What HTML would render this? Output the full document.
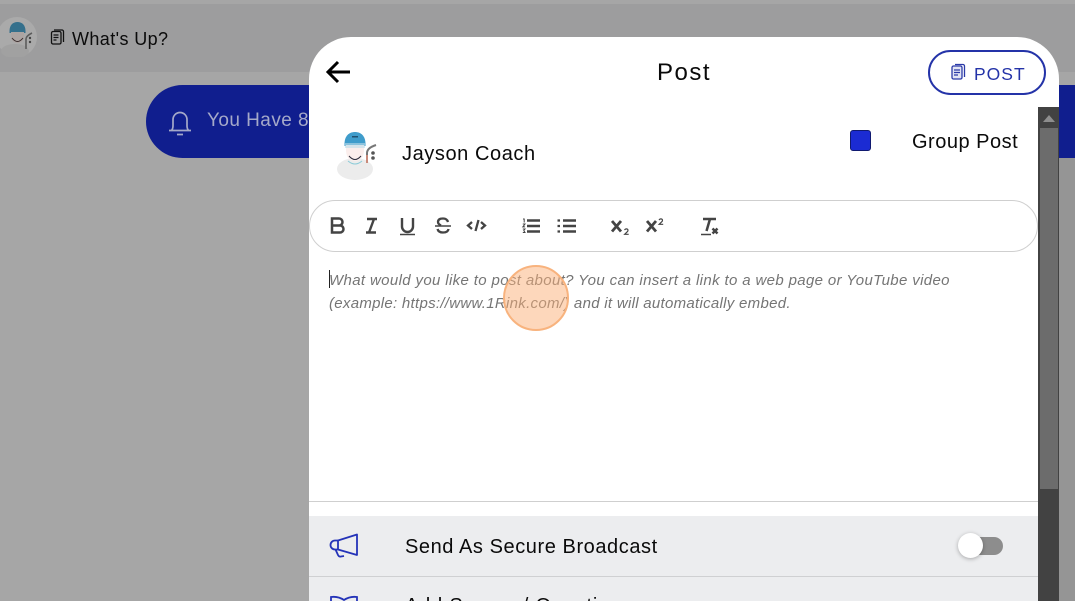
<!DOCTYPE html>
<html><head><meta charset="utf-8">
<style>
html,body{margin:0;padding:0;width:1075px;height:601px;overflow:hidden}
body{background:#a6a6a6;font-family:"Liberation Sans",sans-serif;color:#000}
#w{position:absolute;left:0;top:0;width:1075px;height:601px;overflow:hidden;background:#a6a6a6}
#w>*{position:absolute}
.t{white-space:nowrap}
svg{overflow:hidden}
</style></head><body><div id="w">
<div style="left:-30px;top:4px;width:1200px;height:68px;background:#9d9d9e;border-radius:22px"></div>
<svg style="left:0;top:17px" width="38" height="40" viewBox="0 0 38 40">
<circle cx="17" cy="20" r="20" fill="#aaaaaa"/>
<ellipse cx="15" cy="34" rx="14" ry="7" fill="#a1a1a1"/>
<path d="M9.500 14c0-6 3.500-9 8-9s8 3 8 9v2h-16z" fill="#35708c"/>
<path d="M11 15h13v5q-1 6-6.500 6T11 20z" fill="#aca4a2"/>
<path d="M12 21q5.500 7 11 0" stroke="#3b2f2f" fill="none"/>
<path d="M26 32V22q0-3 6-6" stroke="#5c5c5c" stroke-width="1.600" fill="none"/>
<circle cx="30" cy="21" r="1.200" fill="#444"/><circle cx="30" cy="25" r="1.200" fill="#444"/>
</svg>
<svg style="left:50px;top:28px" width="16" height="18" viewBox="0 0 16 18" fill="none" stroke="#111" stroke-width="1.300">
<rect x="1.500" y="3.500" width="9.500" height="12.500" rx="1.500"/><path d="M4 2h8a1.500 1.500 0 0 1 1.500 1.500V14M3.500 7h5M3.500 9.500h5M3.500 12h3"/>
</svg>
<div class="t" style="left:72px;top:29px;font-size:18px;line-height:21px;letter-spacing:.4px;color:#0b0b0b">What's Up?</div>
<div style="left:146px;top:85px;width:220px;height:73px;border-radius:37px;background:#101e8e"></div>
<svg style="left:167px;top:109px" width="26" height="28" viewBox="0 0 26 28" fill="none" stroke="#a5a9c9" stroke-width="1.700">
<path d="M2 21.500h22M4.500 21.500c1.500-1.500 1.500-3 1.500-5v-6a7 7 0 0 1 14 0v6c0 2 0 3.500 1.500 5M10 25.500h6"/>
</svg>
<div class="t" style="left:207px;top:110px;font-size:19px;line-height:22px;color:#a5a9c9;letter-spacing:.45px">You Have 8</div>

<div style="left:1059px;top:72px;width:16px;height:13px;background:#a6a6a6"></div>
<div style="left:1059px;top:85px;width:16px;height:73px;background:#101e8e"></div>
<div style="left:1059px;top:158px;width:16px;height:443px;background:#959595"></div>

<div style="left:309px;top:37px;width:750px;height:564px;background:#fff;border-radius:42px 42px 0 0"></div>
<div style="left:1038px;top:107px;width:21px;height:494px;background:#424242"></div>
<div style="left:1040px;top:128px;width:18px;height:361px;background:#6c6c6c"></div>
<svg style="left:1043px;top:115px" width="12" height="7" viewBox="0 0 12 7"><path d="M6 0l6 7H0z" fill="#8e8e8e"/></svg>

<svg style="left:325px;top:60px" width="26" height="24" viewBox="0 0 26 24" fill="none" stroke="#000" stroke-width="3">
<path d="M25 12H3M13 2L3 12l10 10"/>
</svg>
<div class="t" style="left:657px;top:59px;font-size:24px;line-height:28px;letter-spacing:1.500px;color:#0a0a0a">Post</div>
<div style="left:928px;top:50px;width:114px;height:41px;border:2px solid #2433a8;border-radius:23px;background:#fff"></div>
<svg style="left:951px;top:63px" width="16" height="18" viewBox="0 0 16 18" fill="none" stroke="#2b3aa8" stroke-width="1.300">
<rect x="1" y="3" width="10" height="13" rx="1.500" fill="#e3e5f4"/><path d="M4 1.500h8a1.500 1.500 0 0 1 1.500 1.500v11M3 7h6M3 9.500h6M3 12h4"/>
</svg>
<div class="t" style="left:974px;top:64px;font-size:17.500px;line-height:20px;letter-spacing:1px;color:#2433a8">POST</div>

<svg style="left:335px;top:130px" width="44" height="52" viewBox="0 0 44 52">
<ellipse cx="20" cy="39" rx="18" ry="11" fill="#ececec"/>
<path d="M9.500 14c0-8 4.500-12 10.500-12s10.500 4 10.500 12v2h-21z" fill="#3f9ccb"/>
<path d="M11 15h18v6q-1 10-9 10t-9-10z" fill="#fbeeec"/>
<path d="M10 13h20v5H10z" fill="#bcdcea" opacity=".6"/>
<path d="M14 26q6 7 12 0" stroke="#2c2c3c" stroke-width="1" fill="none"/>
<path d="M13 31q7 6 14 0" stroke="#8ccbd8" stroke-width="1" fill="none"/>
<rect x="17" y="6" width="6" height="1.500" fill="#1f4f6f"/>
<path d="M32 33V23q0-5 9-8" stroke="#777" stroke-width="2" fill="none"/>
<path d="M32 33V25" stroke="#c98a7a" stroke-width="2" fill="none"/>
<circle cx="38" cy="23" r="1.800" fill="#555"/><circle cx="38" cy="28" r="1.800" fill="#555"/>
</svg>
<div class="t" style="left:402px;top:142px;font-size:20px;line-height:24px;letter-spacing:.58px;color:#0a0a0a">Jayson Coach</div>
<div style="left:850px;top:130px;width:19px;height:19px;background:#1b2bd3;border:1.500px solid #101a70;border-radius:3px"></div>
<div class="t" style="left:912px;top:130px;font-size:20px;line-height:24px;letter-spacing:.5px;color:#0a0a0a">Group Post</div>

<div style="left:309px;top:200px;width:727px;height:50px;border:1px solid #cfcfcf;border-radius:26px;background:#fff"></div>
<svg style="left:329px;top:215px" width="400" height="22" viewBox="0 0 400 22" fill="none" stroke="#444" stroke-width="2.500">
<path d="M3 3.500h7a3.200 3.200 0 0 1 0 7H3zM3 10.500h8a3.500 3.500 0 0 1 0 7H3z"/>
<path d="M38 4h10M37 17.500h10M45 4l-5 13.500" stroke-width="2.400"/>
<path d="M73 3v8.500a5 5 0 0 0 11 0V3" stroke-width="2.400"/><path d="M71 19.500h15" stroke-width="1.500"/>
<path d="M119 7q-1-3.500-5-3.500-5 0-5 3.500 0 2 3 3.500M108.500 14q1 3.500 5.500 3.500 5 0 5.500-3.500" stroke-width="2.300"/><path d="M106 11h16" stroke-width="1.500"/>
<path d="M143 7l-4 3.500 4 3.500M152 7l4 3.500-4 3.500" stroke-width="2.300"/><path d="M149.500 5l-3 11" stroke-width="2.300"/>
<path d="M198 5.500h13M198 11h13M198 16.500h13" stroke-width="2.400"/>
<path d="M194 4h1.200v3.500M193.800 9h2.200l-2.200 2.900h2.300M193.800 14h2.200l-1.200 1.500 1.200 2h-2.200" stroke-width="1"/>
<path d="M234 5.500h13M234 11h13M234 16.500h13" stroke-width="2.400"/>
<path d="M228.500 5.500h2.500M228.500 11h2.500M228.500 16.500h2.500" stroke-width="2.200"/>
<path d="M283 6l9 10.500M292 6l-9 10.500" stroke-width="2.800"/>
<path d="M295.500 15q1-1.500 2.500-1t.7 2.300l-3 3h4" stroke-width="1.200"/>
<path d="M318 6l9 10.500M327 6l-9 10.500" stroke-width="2.800"/>
<path d="M330 5q1-1.500 2.500-1t.7 2.300l-3 3h4" stroke-width="1.200"/>
<path d="M374 4h13M381 4l-3.500 12" stroke-width="2.500"/><path d="M372 19.500h10" stroke-width="1.500"/>
<path d="M383.500 13.500l5 5M388.500 13.500l-5 5" stroke-width="2.500"/>
</svg>

<div style="left:329px;top:270px;width:1px;height:18px;background:#222"></div>
<div class="t" style="left:329px;top:269px;font-size:15px;line-height:23px;font-style:italic;letter-spacing:.36px;color:#757575">What would you like to post about? You can insert a link to a web page or YouTube video</div>
<div class="t" style="left:329px;top:292px;font-size:15px;line-height:23px;font-style:italic;letter-spacing:.29px;color:#757575">(example: https://www.1Rink.com/) and it will automatically embed.</div>
<div style="left:503px;top:265px;width:62px;height:62px;border:2px solid #f8b37e;border-radius:50%;background:rgba(251,176,120,.5)"></div>

<div style="left:309px;top:501px;width:729px;height:1px;background:#cfcfcf"></div>
<div style="left:309px;top:516px;width:729px;height:85px;background:#ecedef"></div>
<div style="left:309px;top:576px;width:729px;height:1px;background:#cfd0d2"></div>
<svg style="left:329px;top:533px" width="30" height="26" viewBox="0 0 30 26" fill="none" stroke="#2433b8" stroke-width="1.800" stroke-linejoin="round">
<path d="M28 1.500v20.500L9 16.500V7.500z"/><path d="M9 7.500H6a4.500 4.500 0 0 0 0 9h3M6.500 16.500l2.500 5.500q1 2 3 1.500l3-.5"/>
</svg>
<div class="t" style="left:405px;top:535px;font-size:20px;line-height:24px;letter-spacing:.57px;color:#0a0a0a">Send As Secure Broadcast</div>
<div style="left:971px;top:537px;width:32px;height:18px;border-radius:9px;background:#8d8d8d"></div>
<div style="left:958px;top:533px;width:25px;height:25px;border-radius:50%;background:#fff;box-shadow:0 1px 4px rgba(0,0,0,.3)"></div>
<svg style="left:329px;top:595px" width="30" height="6" viewBox="0 0 30 6" fill="none" stroke="#2433b8" stroke-width="1.800"><path d="M2 12V2q7-1 13 3 6-4 13-3v10"/></svg>
<div class="t" style="left:405px;top:594px;font-size:20px;line-height:24px;letter-spacing:.8px;color:#0a0a0a">Add Survey / Questions</div>
</div></body></html>
